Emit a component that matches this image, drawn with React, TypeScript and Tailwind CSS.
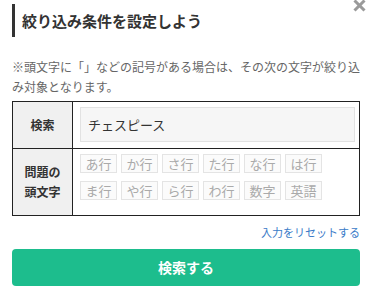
import React from "react";

const rows = [
  ["あ行", "か行", "さ行", "た行", "な行", "は行"],
  ["ま行", "や行", "ら行", "わ行", "数字", "英語"],
];

export default function App() {
  return (
    <div
      className="relative w-[372px] h-[294px] bg-white px-[12px] overflow-hidden"
      style={{ fontFamily: '"Noto Sans CJK JP", "Noto Sans", sans-serif' }}
    >
      <button className="absolute right-[6px] top-[-1px] w-[14px] h-[13px] flex items-center justify-center" aria-label="close">
        <svg width="13" height="13" viewBox="0 0 13 13">
          <path d="M1.5 1.5 L11.5 11.5 M11.5 1.5 L1.5 11.5" stroke="#9a9a9a" strokeWidth="3" strokeLinecap="butt" />
        </svg>
      </button>

      <div className="mt-[4px] h-[33px] border-l-[3px] border-[#333333] pl-[7px] flex items-center">
        <h1 className="text-[15px] leading-none font-bold text-[#333333]">絞り込み条件を設定しよう</h1>
      </div>

      <p className="mt-[20px] text-[12px] leading-[20px] text-[#666666]">
        ※頭文字に「」などの記号がある場合は、その次の文字が絞り込み対象となります。
      </p>

      <div className="mt-[4px] border border-[#222222] grid grid-cols-[60px_1fr]">
        <div className="bg-[#f0f0f0] border-r border-[#222222] flex items-center justify-center h-[46px]">
          <span className="text-[12px] font-bold text-[#333333]">検索</span>
        </div>
        <div className="pl-[7px] pr-[4px] py-[5px] h-[46px]">
          <div className="h-[35px] bg-[#f6f6f6] border border-[#e2e2e2] flex items-center pl-[7px] text-[13px] text-[#333333]">
            チェスピース
          </div>
        </div>
        <div className="bg-[#f0f0f0] border-r border-t border-[#222222] flex items-center justify-center">
          <span className="text-[12px] leading-[20px] font-bold text-[#333333] text-center">
            問題の
            <br />
            頭文字
          </span>
        </div>
        <div className="border-t border-[#222222] pl-[7px] pt-[5px] pb-[15px] flex flex-col gap-[8px]">
          {rows.map((r, i) => (
            <div key={i} className="flex gap-[4px]">
              {r.map((t) => (
                <span
                  key={t}
                  className="w-[37px] h-[19px] border border-[#e4e4e4] bg-[#fbfbfb] flex items-center justify-center text-[13px] leading-none text-[#aaaaaa]"
                >
                  {t}
                </span>
              ))}
            </div>
          ))}
        </div>
      </div>

      <div className="mt-[8px] flex justify-end">
        <a className="text-[11px] leading-[16px] text-[#3a7bc8]">入力をリセットする</a>
      </div>

      <button className="mt-[9px] w-full h-[37px] rounded-[4px] bg-[#1dbd8d] flex items-center justify-center text-[14px] font-bold text-white">
        検索する
      </button>
    </div>
  );
}
